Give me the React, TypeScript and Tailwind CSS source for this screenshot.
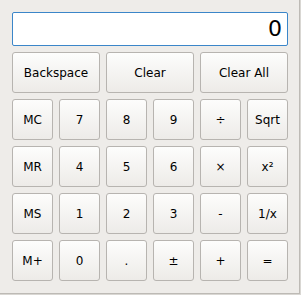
import { type ReactElement } from "react"

const topRow: string[] = ["Backspace", "Clear", "Clear All"]

const grid: string[][] = [
  ["MC", "7", "8", "9", "÷", "Sqrt"],
  ["MR", "4", "5", "6", "×", "x²"],
  ["MS", "1", "2", "3", "-", "1/x"],
  ["M+", "0", ".", "±", "+", "="],
]

function Key({ label, wide }: { label: string, wide?: boolean }): ReactElement {
  return (
    <button
      className={
        (wide ? "col-span-2 " : "") +
        "h-[41px] rounded-[3px] border border-[#b7b4b0] bg-gradient-to-b from-[#fdfdfc] to-[#edebe8] text-[12px] text-black flex items-center justify-center"
      }
    >
      {label}
    </button>
  )
}

export default function App(): ReactElement {
  return (
    <div className="w-[301px] h-[295px] bg-[#d9d7d3]" style={{ fontFamily: '"DejaVu Sans", sans-serif' }}>
      <div className="w-[300px] h-[294px] bg-[#eeece9] border-r border-b border-[#bdbab5] pl-[12px] pt-[12px] pr-[11px] pb-[11px]">
        <div className="h-[34px] w-[276px] rounded-[2px] border border-[#3b86c9] bg-white flex items-center justify-end pr-[5px] text-[22px] text-black leading-none">
          0
        </div>
        <div className="mt-[6px] grid grid-cols-[repeat(6,41px)] gap-[6px]">
          {topRow.map((t) => (
            <Key key={t} label={t} wide />
          ))}
          {grid.flat().map((t, i) => (
            <Key key={i} label={t} />
          ))}
        </div>
      </div>
    </div>
  )
}
